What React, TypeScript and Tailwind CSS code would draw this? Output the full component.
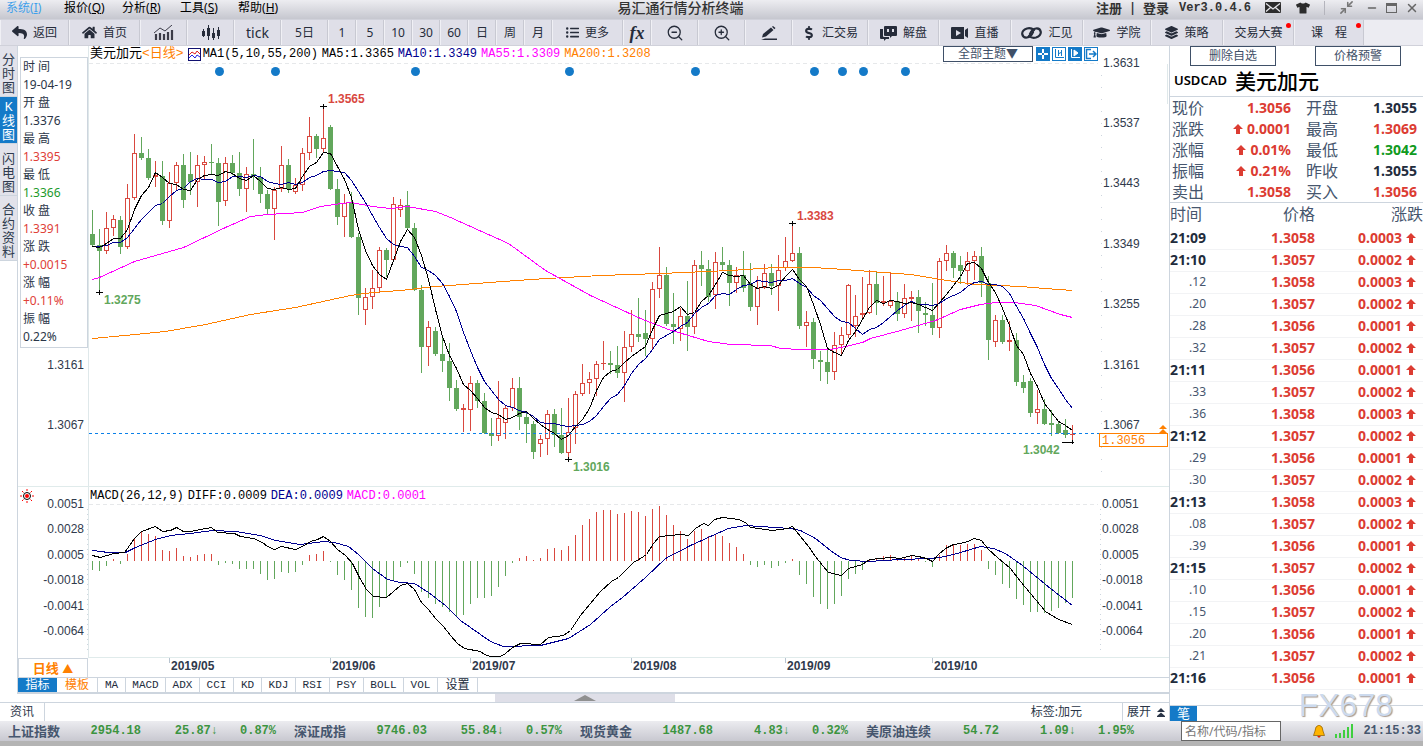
import type { ReactNode } from "react";
import { FaDollarSign, FaGraduationCap, FaHome, FaLayerGroup, FaListUl, FaReply, FaTshirt } from "react-icons/fa";
import { Minimize2, Minus, X, ZoomIn, ZoomOut } from "lucide-react";

// 1 = up (hollow red), 0 = down (solid green); then high, body top, body bottom, low
type Candle = [number, number, number, number, number];

const CANDLES: Candle[] = [
  [0, 210, 234, 245, 245], [0, 229, 245, 251, 292], [1, 212, 228, 251, 253], [1, 215, 219, 228, 235],
  [0, 216, 220, 247, 253], [1, 184, 198, 247, 248], [1, 134, 153, 198, 199], [0, 137, 153, 158, 159],
  [0, 149, 158, 178, 179], [1, 161, 175, 177, 186], [0, 161, 176, 221, 224], [1, 172, 183, 221, 227],
  [1, 162, 165, 183, 190], [0, 154, 165, 200, 207], [0, 152, 174, 182, 194], [1, 155, 165, 182, 206],
  [1, 156, 162, 165, 178], [0, 144, 162, 163, 174], [0, 158, 163, 202, 225], [1, 157, 163, 201, 205],
  [0, 155, 163, 173, 174], [0, 152, 173, 189, 195], [1, 167, 174, 189, 211], [0, 139, 174, 176, 189],
  [0, 167, 177, 194, 202], [0, 190, 194, 209, 214], [1, 187, 190, 209, 239], [1, 146, 165, 189, 191],
  [0, 159, 165, 189, 192], [1, 178, 185, 192, 193], [1, 148, 153, 185, 190], [1, 117, 136, 153, 159],
  [0, 134, 136, 149, 157], [1, 106, 138, 149, 151], [0, 125, 127, 189, 189], [0, 179, 189, 217, 224],
  [1, 194, 203, 217, 236], [0, 192, 203, 237, 237], [0, 233, 237, 298, 314], [1, 288, 297, 310, 324],
  [1, 270, 288, 297, 308], [1, 247, 250, 288, 292], [0, 248, 250, 260, 276], [1, 197, 204, 260, 260],
  [1, 199, 205, 210, 216], [0, 191, 205, 228, 228], [0, 223, 228, 290, 290], [0, 285, 290, 347, 372],
  [1, 321, 327, 347, 365], [0, 327, 331, 354, 355], [0, 337, 354, 361, 371], [0, 343, 361, 388, 400],
  [0, 380, 388, 409, 410], [1, 404, 408, 410, 431], [1, 376, 383, 410, 430], [0, 380, 383, 401, 407],
  [0, 393, 401, 433, 433], [0, 418, 433, 436, 445], [1, 381, 418, 436, 440], [1, 405, 408, 423, 438],
  [1, 378, 388, 408, 410], [0, 377, 388, 417, 429], [0, 411, 417, 424, 442], [0, 421, 424, 452, 458],
  [1, 435, 439, 444, 456], [1, 410, 414, 439, 454], [0, 409, 414, 435, 446], [0, 408, 435, 453, 453],
  [1, 398, 432, 453, 459], [1, 391, 394, 428, 443], [1, 364, 383, 394, 395], [1, 372, 379, 383, 393],
  [1, 361, 364, 379, 395], [1, 341, 363, 364, 369], [0, 351, 363, 365, 373], [0, 346, 365, 373, 377],
  [1, 331, 347, 373, 401], [1, 310, 334, 347, 351], [0, 298, 334, 337, 341], [0, 310, 333, 339, 355],
  [1, 282, 289, 339, 348], [1, 247, 275, 289, 297], [0, 267, 275, 324, 325], [0, 293, 324, 327, 343],
  [1, 308, 316, 329, 340], [0, 281, 316, 327, 350], [1, 260, 265, 327, 333], [0, 251, 265, 269, 285],
  [0, 260, 269, 297, 301], [1, 252, 262, 295, 308], [0, 247, 262, 265, 270], [0, 260, 265, 283, 305],
  [1, 267, 275, 283, 292], [0, 251, 275, 288, 291], [0, 263, 283, 307, 310], [1, 276, 288, 307, 324],
  [1, 264, 273, 288, 288], [0, 264, 273, 286, 294], [1, 255, 270, 286, 310], [1, 237, 261, 268, 270],
  [1, 223, 253, 261, 261], [0, 247, 253, 326, 328], [1, 311, 322, 326, 346], [0, 318, 322, 359, 368],
  [0, 351, 360, 362, 380], [0, 347, 362, 372, 383], [1, 332, 345, 372, 379], [1, 327, 335, 345, 354],
  [1, 284, 285, 335, 337], [1, 295, 316, 326, 336], [1, 277, 313, 315, 318], [1, 270, 284, 313, 313],
  [0, 271, 284, 303, 314], [1, 276, 301, 303, 305], [1, 273, 301, 306, 307], [0, 292, 301, 314, 320],
  [1, 284, 298, 314, 317], [1, 291, 297, 299, 320], [0, 290, 297, 311, 332], [0, 302, 313, 315, 325],
  [0, 283, 315, 328, 334], [1, 258, 261, 328, 337], [1, 245, 253, 261, 270], [0, 251, 253, 268, 277],
  [0, 256, 265, 271, 283], [1, 252, 261, 271, 284], [1, 251, 256, 261, 279], [0, 247, 256, 283, 296],
  [0, 276, 283, 340, 359], [1, 315, 320, 342, 346], [0, 315, 320, 342, 343], [1, 321, 340, 342, 350],
  [0, 333, 340, 382, 385], [0, 375, 382, 388, 392], [0, 378, 381, 413, 416], [1, 390, 409, 413, 423],
  [0, 399, 409, 424, 424], [0, 410, 423, 425, 435], [0, 421, 424, 433, 433], [0, 419, 430, 435, 437],
  [1, 425, 434, 435, 441],
];

// tip of every MACD bar; the zero line is at 561
const MACD_BARS = [
  570, 571, 566, 559, 564, 554, 539, 532, 534, 536, 550, 551, 548, 556, 557, 555, 554, 554, 565, 563,
  564, 569, 569, 569, 574, 580, 579, 572, 573, 572, 565, 555, 554, 551, 562, 575, 580, 590, 608, 617,
  618, 607, 598, 580, 567, 563, 574, 592, 598, 604, 607, 612, 616, 615, 604, 598, 598, 596, 587, 576,
  563, 558, 556, 560, 558, 549, 548, 550, 546, 535, 525, 519, 512, 510, 510, 514, 513, 511, 512, 516,
  509, 506, 515, 525, 531, 539, 531, 529, 536, 535, 536, 543, 547, 554, 565, 567, 565, 568, 566, 563,
  559, 575, 584, 597, 604, 609, 604, 596, 579, 574, 570, 559, 558, 556, 555, 558, 557, 556, 558, 562,
  567, 555, 545, 544, 545, 544, 544, 550, 569, 575, 584, 588, 599, 605, 612, 612, 613, 611, 608, 603,
  598,
];

const MA55 =
  "92,279 99,277 134,261 183,247 225,227 250,216 267,214 302,212 320,206 341,203 351,202 372,206 390,208 407,206 435,211 450,217 508,243 545,270 563,280 590,295 640,318 668,329 708,341 730,344 770,345 780,348 800,349 830,349 845,346 862,342 870,338 900,330 935,320 960,309 980,304 995,302 1014,302 1035,305 1060,314 1072,317";
const MA200 =
  "92,338 135,334 165,331 205,324 250,314 295,307 350,295 372,292 400,290 435,286 530,279 600,275 660,273 730,270 745,269 775,267 810,267 830,268 870,271 910,274 940,279 975,284 1020,286 1045,288 1072,290";
const DIFF =
  "92,555 100,557 113,553 124,552 127,548 134,538 141,531 155,526 162,531 170,530 176,527 183,531 190,531 200,529 211,527 217,532 234,533 240,536 253,538 262,542 267,546 274,549 281,546 295,549 302,546 310,541 317,539 323,536 330,541 337,549 345,555 352,563 359,577 366,589 373,596 386,597 393,591 400,585 407,583 414,589 421,602 428,609 435,618 443,626 450,635 457,643 464,648 480,651 484,654 490,656 500,656 505,653 512,647 520,643 540,644 548,637 563,635 570,630 580,615 600,591 611,581 618,577 633,562 640,558 646,554 653,543 659,536 680,534 688,535 695,528 703,523 708,525 714,519 722,517 738,519 745,522 750,527 758,528 772,530 787,528 792,526 800,536 808,546 815,556 822,565 828,572 841,575 848,568 862,564 869,559 890,557 900,558 911,555 918,556 926,558 932,561 938,554 945,548 953,544 960,543 967,541 974,538 981,540 988,549 997,557 1010,568 1020,581 1035,599 1045,611 1058,619 1072,624";
const DEA =
  "92,550 108,552 125,552 135,547 155,539 170,535 190,533 212,530 235,531 260,535 275,540 300,544 323,541 334,542 348,546 358,554 372,568 387,579 400,582 414,583 428,592 445,605 460,620 480,634 490,641 503,646 540,645 568,638 590,624 610,606 622,597 645,577 665,558 690,545 710,536 728,528 745,525 790,528 800,530 815,538 830,550 840,557 850,560 868,561 900,559 930,558 945,556 960,552 980,546 993,548 1005,553 1022,565 1050,588 1072,605";

const barX = (i: number) => 92 + i * 7;

function movingAverage(n: number) {
  const closes = [...Array(n - 1).fill(246), ...CANDLES.map((c) => (c[0] ? c[2] : c[3]))];
  return CANDLES.map((_, i) => {
    const sum = closes.slice(i, i + n).reduce((a, b) => a + b, 0);
    return `${barX(i)},${Math.round(sum / n)}`;
  }).join(" ");
}

const PRICE_LABELS: [string, number][] = [
  ["1.3631", 63], ["1.3537", 123], ["1.3443", 183], ["1.3349", 244], ["1.3255", 304], ["1.3161", 365], ["1.3067", 425],
];
const MACD_LABELS: [string, number][] = [
  ["0.0051", 504], ["0.0028", 529], ["0.0005", 555], ["-0.0018", 580], ["-0.0041", 606], ["-0.0064", 631],
];
const EVENTS = [219, 275, 415, 569, 695, 814, 842, 863, 905];
const MONTHS: [string, number][] = [
  ["2019/05", 169], ["2019/06", 330], ["2019/07", 470], ["2019/08", 631], ["2019/09", 785], ["2019/10", 932],
];

const INFO: [string, string, string][] = [
  ["时 间", "19-04-19", "text-[#2b3648]"],
  ["开 盘", "1.3376", "text-[#2b3648]"],
  ["最 高", "1.3395", "text-[#e04038]"],
  ["最 低", "1.3366", "text-[#1c9a2c]"],
  ["收 盘", "1.3391", "text-[#e04038]"],
  ["涨 跌", "+0.0015", "text-[#e04038]"],
  ["涨 幅", "+0.11%", "text-[#e04038]"],
  ["振 幅", "0.22%", "text-[#2b3648]"],
];

const QUOTE: [string, string, string, boolean][] = [
  ["现价", "1.3056", "text-[#dc3c32]", false], ["开盘", "1.3055", "text-[#222c3c]", false],
  ["涨跌", "0.0001", "text-[#dc3c32]", true], ["最高", "1.3069", "text-[#dc3c32]", false],
  ["涨幅", "0.01%", "text-[#dc3c32]", true], ["最低", "1.3042", "text-[#109a20]", false],
  ["振幅", "0.21%", "text-[#dc3c32]", true], ["昨收", "1.3055", "text-[#222c3c]", false],
  ["卖出", "1.3058", "text-[#dc3c32]", false], ["买入", "1.3056", "text-[#dc3c32]", false],
];

const TICKS: [string, string, string][] = [
  ["21:09", "1.3058", "0.0003"], ["21:10", "1.3057", "0.0002"], [".12", "1.3058", "0.0003"],
  [".20", "1.3057", "0.0002"], [".28", "1.3056", "0.0001"], [".32", "1.3057", "0.0002"],
  ["21:11", "1.3056", "0.0001"], [".33", "1.3057", "0.0002"], [".36", "1.3058", "0.0003"],
  ["21:12", "1.3057", "0.0002"], [".29", "1.3056", "0.0001"], [".30", "1.3057", "0.0002"],
  ["21:13", "1.3058", "0.0003"], [".08", "1.3057", "0.0002"], [".39", "1.3056", "0.0001"],
  ["21:15", "1.3057", "0.0002"], [".10", "1.3056", "0.0001"], [".15", "1.3057", "0.0002"],
  [".20", "1.3056", "0.0001"], [".21", "1.3057", "0.0002"], ["21:16", "1.3056", "0.0001"],
];

const INDEXES = [
  ["上证指数", "2954.18", "25.87", "0.87%"],
  ["深证成指", "9746.03", "55.84", "0.57%"],
  ["现货黄金", "1487.68", "4.83", "0.32%"],
  ["美原油连续", "54.72", "1.09", "1.95%"],
];

function UpArrow() {
  return (
    <svg viewBox="0 0 10 10" className="size-[10px] shrink-0 fill-[#dc3c32]">
      <path d="M5 0L10 5H7V10H3V5H0Z" />
    </svg>
  );
}

function MenuBar() {
  const menus = [["系统", "I"], ["报价", "Q"], ["分析", "R"], ["工具", "S"], ["帮助", "H"]];
  return (
    <header className="flex h-[19px] items-center bg-gradient-to-b from-[#ededf1] to-[#c6c7cf] leading-4">
      <nav className="flex flex-1 pl-1.5 text-[12px]">
        {menus.map(([name, key], i) => (
          <button key={key} className={`w-[58px] pb-1 text-left whitespace-nowrap ${i === 0 ? "text-[#3fa0ea]" : "text-black"}`}>
            {name}(<u>{key}</u>)
          </button>
        ))}
      </nav>
      <h1 className="mr-16 pb-1 text-[14px] font-medium text-[#333]">易汇通行情分析终端</h1>
      <div className="flex flex-1 items-center justify-end pr-1 pb-1 text-[#333]">
        <button className="text-[13px] font-bold">注册</button>
        <span className="w-[21px] text-center text-[12px] font-bold">|</span>
        <button className="text-[13px] font-bold">登录</button>
        <span className="ml-2.5 font-['Liberation_Mono',monospace] text-[12px] font-bold">Ver3.0.4.6</span>
        <button aria-label="邮件" className="ml-3.5">
          <svg viewBox="0 0 16 11" className="h-[11px] w-4">
            <rect width="16" height="11" rx="1" fill="#2c2c2c" />
            <path d="M1 1.5L8 7L15 1.5M1 9.5L5.5 5.5M15 9.5L10.5 5.5" fill="none" stroke="#e4e4e8" strokeWidth="1.3" />
          </svg>
        </button>
        <button aria-label="皮肤" className="ml-[15px]"><FaTshirt className="size-[14px] text-[#2c2c2c]" /></button>
        <span className="ml-3.5 h-3.5 w-px bg-[#b4b4bc]" />
        <button aria-label="还原" className="ml-3.5"><Minimize2 className="size-[15px] text-[#777]" strokeWidth={2.5} /></button>
        <button aria-label="最小化" className="ml-3"><Minus className="size-3 text-[#666]" strokeWidth={3} /></button>
        <button aria-label="最大化" className="ml-2 h-2.5 w-[11px] border border-t-[3px] border-[#666]" />
        <button aria-label="关闭" className="ml-2"><X className="size-[14px] text-[#666]" strokeWidth={2.5} /></button>
      </div>
    </header>
  );
}

function Tool({ w, children }: { w: string; children: ReactNode }) {
  return (
    <button className={`${w} relative flex shrink-0 items-center justify-center gap-1.5 border-r border-r-[#c8c9d2] border-l border-l-[#f0f0f5]`}>
      {children}
    </button>
  );
}

function Toolbar() {
  return (
    <div className="flex h-[27px] overflow-hidden border-t border-b border-[#d0d1da] bg-[#ececf2] text-[12px] text-[#262c3a] [&>button]:bg-[#dfdfe8]">
      <Tool w="w-[69px]"><FaReply className="size-[15px]" />返回</Tool>
      <Tool w="w-[71px]"><FaHome className="size-[15px]" />首页</Tool>
      <Tool w="w-[47px]">
        <svg viewBox="0 0 20 16" className="h-4 w-5" fill="none" stroke="#3c3c48">
          <path d="M2 15V9M6 15V8M10 15V9M14 15V7M18 15V5" strokeWidth="2.2" />
          <path d="M0 8L6 3L11 6L18 0" />
        </svg>
      </Tool>
      <Tool w="w-[47px]">
        <svg viewBox="0 0 20 16" className="h-4 w-5" fill="#262c3a">
          <path d="M1 6h3v5H1zM2 4h1v8H2zM6 3h3v8H6zM7 0h1v15H7zM11 8h3v5h-3zM12 3h1v12h-1zM16 5h3v6h-3zM17 2h1v12h-1z" />
        </svg>
      </Tool>
      <Tool w="w-[47px]"><span className="text-[14px]">tick</span></Tool>
      <Tool w="w-[47px]">5日</Tool>
      {["1", "5", "10", "30", "60", "日", "周", "月"].map((t) => <Tool key={t} w="w-[28px]">{t}</Tool>)}
      <Tool w="w-[71px]"><FaListUl className="size-[13px]" />更多</Tool>
      <Tool w="w-[28px]"><i className="font-['Liberation_Serif',serif] text-[18px] leading-4 font-bold">fx</i></Tool>
      <Tool w="w-[47px]"><ZoomOut className="size-[18px]" strokeWidth={1.7} /></Tool>
      <Tool w="w-[47px]"><ZoomIn className="size-[18px]" strokeWidth={1.7} /></Tool>
      <Tool w="w-[47px]">
        <svg viewBox="0 0 16 14" className="h-3.5 w-4" fill="#262c3a">
          <path d="M2 8L10 1.5L12.5 4L5 10.5L1 11.5ZM11 .8L12 0L14.5 2L13.3 3.2ZM4 12.5H16V14H0Z" />
        </svg>
      </Tool>
      <Tool w="w-[76px]"><FaDollarSign className="size-[14px]" />汇交易</Tool>
      <Tool w="w-[71px]">
        <svg viewBox="0 0 17 16" className="h-4 w-[17px]" fill="#262c3a">
          <path d="M5 1h11q1 0 1 1v8q0 1-1 1h-4l-2 2v-2H5q-1 0-1-1V2q0-1 1-1z" />
          <path d="M0 4h3v7q0 1 1 1h5v2H6l-2 2v-2H1q-1 0-1-1z" />
          <path d="M7 4h2v3H7zM12 4h2v3h-2z" fill="#dfdfe8" />
        </svg>
        解盘
      </Tool>
      <Tool w="w-[72px]">
        <svg viewBox="0 0 17 12" className="h-3 w-[17px]" fill="#262c3a">
          <path d="M1 0H13V12H1Q0 12 0 11V1Q0 0 1 0ZM14 3L17 1V11L14 9Z" />
          <path d="M5 3L10 6L5 9Z" fill="#dfdfe8" />
        </svg>
        直播
      </Tool>
      <Tool w="w-[72px]">
        <svg viewBox="0 0 21 12" className="h-3 w-[21px]" fill="none" stroke="#262c3a" strokeWidth="2.2" strokeLinecap="round">
          <path d="M13 3Q10 .5 6 1.5Q1 3 1.2 7Q2 11 6 10.5Q10 10 12 5" />
          <path d="M8 9Q11 11.5 15 10.5Q20 9 19.8 5Q19 1 15 1.5Q11 2 9 7" />
        </svg>
        汇见
      </Tool>
      <Tool w="w-[68px]"><FaGraduationCap className="size-[17px]" />学院</Tool>
      <Tool w="w-[72px]"><FaLayerGroup className="size-[13px]" />策略</Tool>
      <Tool w="w-[71px]">
        交易大赛
        <span className="absolute top-[3px] right-[2px] size-[5px] rounded-full bg-[#f00]" />
      </Tool>
      <Tool w="w-[70px]">
        <span className="flex gap-3"><span>课</span><span>程</span></span>
        <span className="absolute top-[3px] right-[2px] size-[5px] rounded-full bg-[#f00]" />
      </Tool>
    </div>
  );
}

function SideTabs() {
  const tab = "flex w-full items-center justify-center border-b border-[#cdd5de]";
  return (
    <div className="w-[18px] shrink-0 border-r border-[#cdd5de] text-[13px] leading-[14px] break-all text-[#2f3b4e]">
      <button className={`${tab} h-[51px] bg-[#e2e2ea] pt-1`}><span className="w-[13px]">分时图</span></button>
      <button className={`${tab} h-[47px] bg-[#147ac8] text-white`}><span className="w-[13px]">K线图</span></button>
      <button className={`${tab} h-[52px] bg-[#e2e2ea] pt-1`}><span className="w-[13px]">闪电图</span></button>
      <button className={`${tab} h-[65px] bg-[#e2e2ea] pt-1`}><span className="w-[13px]">合约资料</span></button>
    </div>
  );
}

function Cross({ x, y }: { x: number; y: number }) {
  return <path d={`M${x - 3} ${y + 0.5}H${x + 4}M${x + 0.5} ${y - 2}V${y + 3}`} stroke="#000" />;
}

function PriceChart() {
  return (
    <svg
      viewBox="18 63 1151 424"
      className="block h-auto w-full overflow-visible font-['Liberation_Sans',sans-serif] text-[12px]"
      shapeRendering="crispEdges"
      fill="none"
    >
      <path d="M88.5 46V487M1167.5 64V104" stroke="#dfe8ea" />
      <path d="M89 63.5H1098" stroke="#e6e8ea" strokeDasharray="4 3" />
      <path d="M18 486.5H1169" stroke="#e0ebeb" />
      <path d="M1101.5 75V480" stroke="#cdd5de" strokeDasharray="1 11" />
      <g fill="#147ac8" shapeRendering="auto">
        {EVENTS.map((x) => <circle key={x} cx={x + 0.5} cy={71.5} r={4.5} />)}
      </g>
      {CANDLES.map(([up, high, top, bottom, low], i) => {
        const x = barX(i);
        const color = up ? "#d9483f" : "#62a75c";
        return (
          <g key={i}>
            <rect x={x} y={high} width={1} height={low - high + 1} fill={color} />
            <rect x={x - 2} y={top} width={5} height={Math.max(bottom - top, 1)} fill={color} />
            {up === 1 && bottom - top > 2 && (
              <rect x={x - 1} y={top + 1} width={3} height={bottom - top - 2} fill="#fff" />
            )}
          </g>
        );
      })}
      <g transform="translate(0.5 0.5)">
        <polyline points={MA200} stroke="#ff8000" />
        <polyline points={MA55} stroke="#f0f" />
        <polyline points={movingAverage(10)} stroke="#000090" />
        <polyline points={movingAverage(5)} stroke="#000" />
      </g>
      <path d="M89 433.5H1099" stroke="#0a80e8" strokeDasharray="3 3" />

      <Cross x={99} y={292} />
      <Cross x={323} y={106} />
      <Cross x={568} y={459} />
      <Cross x={792} y={223} />
      <path d="M1062 442.5H1074M1072.5 440V444" stroke="#000" />
      <g className="font-bold" fill="#d9483f">
        <text x="328" y="103">1.3565</text>
        <text x="797" y="220">1.3383</text>
      </g>
      <g className="font-bold" fill="#62a75c">
        <text x="104" y="304">1.3275</text>
        <text x="573" y="471">1.3016</text>
        <text x="1023" y="454">1.3042</text>
      </g>
      <g fill="#303a4c">
        {PRICE_LABELS.map(([t, y]) => <text key={t} x={1103} y={y + 4}>{t}</text>)}
        {PRICE_LABELS.slice(5).map(([t, y]) => <text key={t} x={84} y={y + 4} textAnchor="end">{t}</text>)}
      </g>
      <rect x="1099.5" y="433.5" width="68" height="13" stroke="#ff8000" fill="#fff" />
      <text x="1102" y="444" fill="#ff8000" className="font-['Liberation_Mono',monospace]">1.3056</text>
      <path d="M1159 429L1163 425L1167 429ZM1159 433L1163 429L1167 433Z" fill="#ff8000" shapeRendering="auto" />
    </svg>
  );
}

function MacdChart() {
  return (
    <svg
      viewBox="18 504 1151 154"
      className="block h-auto w-full overflow-visible font-['Liberation_Sans',sans-serif] text-[12px]"
      shapeRendering="crispEdges"
      fill="none"
    >
      <path d="M88.5 487V658" stroke="#dfe8ea" />
      <path d="M89 504.5H1098" stroke="#e6e8ea" strokeDasharray="4 3" />
      <path d="M88 657.5H1169" stroke="#e0ebeb" />
      <path d="M87.5 509V654M1100.5 509V654" stroke="#cdd5de" strokeDasharray="1 4" />
      {MACD_BARS.map((y, i) => (
        <rect
          key={i}
          x={barX(i)}
          y={Math.min(y, 561)}
          width={1}
          height={Math.abs(y - 561) || 1}
          fill={y < 561 ? "#d9483f" : "#62a75c"}
        />
      ))}
      <g transform="translate(0.5 0.5)">
        <polyline points={DEA} stroke="#000090" />
        <polyline points={DIFF} stroke="#000" />
      </g>
      <g fill="#303a4c">
        {MACD_LABELS.map(([t, y]) => <text key={t} x={84} y={y + 4} textAnchor="end">{t}</text>)}
        {MACD_LABELS.map(([t, y]) => <text key={t} x={1102} y={y + 4}>{t}</text>)}
      </g>
    </svg>
  );
}

function InfoPanel() {
  return (
    <dl className="absolute top-[11px] left-[2px] w-[68px] border border-[#cdd5de] bg-white pb-px pl-0.5 text-[12px] leading-[18px] text-[#2b3648]">
      {INFO.map(([label, value, color]) => (
        <div key={label}>
          <dt>{label}</dt>
          <dd className={color}>{value}</dd>
        </div>
      ))}
    </dl>
  );
}

function ChartHeader() {
  const sq = "flex size-[14px] items-center justify-center border border-[#147ac8]";
  return (
    <div className="flex h-[17px] items-start pl-[72px] leading-4">
      <div className="flex flex-1 items-center gap-1 whitespace-nowrap text-[12px] font-['Liberation_Mono','Noto_Sans_CJK_SC',monospace]">
        <span className="text-[13px] text-black">
          美元加元<span className="text-[#ff8000]">&lt;日线&gt;</span>
        </span>
        <span className="flex items-center gap-0.5">
          <svg viewBox="0 0 13 13" className="size-[13px]" fill="none">
            <rect x=".5" y=".5" width="12" height="12" stroke="#101070" />
            <path d="M1 7L4 4L7 6L9 3L12 6" stroke="#e02020" />
            <path d="M1 10L4 7L7 10L9 7L12 9" stroke="#2020e0" />
          </svg>
          <span className="text-black">MA1(5,10,55,200)</span>
        </span>
        <span className="text-black">MA5:1.3365</span>
        <span className="text-[#000090]">MA10:1.3349</span>
        <span className="text-[#f0f]">MA55:1.3309</span>
        <span className="text-[#ff8000]">MA200:1.3208</span>
      </div>
      <div className="mr-[71px] flex items-center gap-0.5">
        <button className="mr-px h-4 w-[90px] border border-[#3f5068] text-[12px] leading-[14px] text-[#3f5068]">全部主题▼</button>
        <button aria-label="十字光标" className={`${sq} bg-[#147ac8]`}>
          <svg viewBox="0 0 12 12" className="size-3" stroke="#fff" strokeWidth="2"><path d="M6 1V5M6 7V11M1 6H5M7 6H11" /></svg>
        </button>
        <button aria-label="坐标" className={sq}>
          <svg viewBox="0 0 12 12" className="size-3" stroke="#147ac8" fill="none"><path d="M2.5 1V9.5H11M5.5 2V8M8.5 2V8M5 6L9 4" /></svg>
        </button>
        <button aria-label="播放" className={`${sq} bg-[#147ac8]`}>
          <svg viewBox="0 0 12 12" className="size-3" stroke="#fff" fill="none"><path d="M2.5 1V9.5H11" /><path d="M5 2L9 5L5 8Z" fill="#fff" /></svg>
        </button>
        <button aria-label="移到最右" className={sq}>
          <svg viewBox="0 0 12 12" className="size-3" stroke="#147ac8" fill="none"><path d="M6 1.5H1.5V10.5H6M4 6H10M8 3L11 6L8 9" strokeWidth="1.5" /></svg>
        </button>
      </div>
    </div>
  );
}

function MacdHeader() {
  return (
    <div className="flex h-[17px] items-center font-['Liberation_Mono',monospace] text-[12px] leading-4">
      <div className="w-[72px] pl-0.5">
        <svg viewBox="0 0 14 14" className="size-[14px]" fill="none">
          <path d="M7 0V2M7 12V14M0 7H2M12 7H14M2 2L3.5 3.5M10.5 10.5L12 12M12 2L10.5 3.5M2 12L3.5 10.5" stroke="#f00" />
          <circle cx="7" cy="7" r="3.5" stroke="#000" />
          <circle cx="7" cy="7" r="2" fill="#f00" />
        </svg>
      </div>
      <div className="flex gap-1 whitespace-nowrap">
        <span className="text-black">MACD(26,12,9)</span>
        <span className="text-black">DIFF:0.0009</span>
        <span className="text-[#000090]">DEA:0.0009</span>
        <span className="text-[#f0f]">MACD:0.0001</span>
      </div>
    </div>
  );
}

function IndicatorTabs() {
  const narrow = ["ADX", "CCI", "RSI", "PSY", "VOL", "KDJ"];
  const names = ["MA", "MACD", "ADX", "CCI", "KD", "KDJ", "RSI", "PSY", "BOLL", "VOL", "设置"];
  return (
    <div className="flex h-[17px] border-t border-b-2 border-[#cdd5de] text-[12px] leading-[14px]">
      <button className="w-[39px] bg-[#147ac8] text-white">指标</button>
      <button className="w-[41px] border-r border-[#cdd5de] text-[#ff8000]">模板</button>
      {names.map((n) => (
        <button
          key={n}
          className={`${n === "MA" || n === "KD" ? "w-[28px]" : narrow.includes(n) ? "w-[34px]" : "w-[40px]"} border-r border-[#cdd5de] text-[#222c3c] ${
            n === "设置" ? "" : "font-['Liberation_Mono',monospace] text-[11px]"
          }`}
        >
          {n}
        </button>
      ))}
    </div>
  );
}

function ChartArea() {
  return (
    <main className="min-w-0 flex-1">
      <section className="relative">
        <ChartHeader />
        <PriceChart />
        <InfoPanel />
      </section>
      <MacdHeader />
      <MacdChart />
      <div className="flex h-[19px]">
        <button className="w-[70px] shrink-0 border border-b-0 border-[#cdd5de] text-[13px] leading-[18px] font-bold text-[#ff8000]">
          日线 <span className="text-[11px]">▲</span>
        </button>
        <svg viewBox="88 658 1081 19" className="h-[19px] min-w-0 flex-1 font-['Liberation_Sans',sans-serif] text-[12px] font-bold">
          {MONTHS.map(([t, x]) => (
            <g key={t}>
              <path d={`M${x + 0.5} 658V663`} stroke="#b8c4d0" />
              <text x={x + 2} y={670} fill="#303a4c">{t}</text>
            </g>
          ))}
        </svg>
      </div>
      <IndicatorTabs />
    </main>
  );
}

function QuotePanel() {
  const btn = "h-5 w-[86px] border border-[#3f5068] text-[12px] leading-[18px] text-[#3f5068]";
  return (
    <aside className="relative flex w-[254px] shrink-0 flex-col border-l border-[#cdd5de]">
      <div className="flex gap-[39px] pl-5">
        <button className={btn}>删除自选</button>
        <button className={btn}>价格预警</button>
      </div>
      <h2 className="flex h-[31px] items-center gap-2 border-b border-[#cdd5de] pl-1 text-black">
        <span className="text-[13px] font-semibold">USDCAD</span>
        <span className="text-[21px] leading-6 font-medium">美元加元</span>
      </h2>
      <dl className="grid grid-cols-[119px_1fr] gap-x-[15px] border-b border-[#cdd5de] pr-1.5 pl-0.5">
        {QUOTE.map(([label, value, color, arrow]) => (
          <div key={label} className="flex h-[21px] items-center justify-between">
            <dt className="text-[16px] leading-5 text-[#46566e]">{label}</dt>
            <dd className={`flex items-center gap-1 text-[14px] leading-5 font-bold ${color}`}>
              {arrow && <UpArrow />}
              {value}
            </dd>
          </div>
        ))}
      </dl>
      <table className="w-full table-fixed border-collapse">
        <thead>
          <tr className="h-6 align-top text-[16px] leading-[22px] text-[#46566e] [&>th]:p-0 [&>th]:font-normal">
            <th className="w-[36px] text-left whitespace-nowrap">时间</th>
            <th className="w-[109px] text-right">价格</th>
            <th className="text-right">涨跌</th>
          </tr>
        </thead>
        <tbody>
          {TICKS.map(([time, price, change], i) => (
            <tr key={i} className="h-[22px] border-b border-[#f2f3f5] text-right text-[14px] leading-5 font-bold text-[#dc3c32]">
              <td className={`p-0 ${time[0] === "." ? "text-[12px] font-normal text-[#46566e]" : "text-[#222c3c]"}`}>{time}</td>
              <td className="p-0">{price}</td>
              <td className="py-0 pr-[7px] pl-0">
                <span className="flex items-center justify-end gap-1">{change}<UpArrow /></span>
              </td>
            </tr>
          ))}
        </tbody>
      </table>
      <div className="mt-auto h-4 border-t border-[#cdd5de]">
        <button className="block h-[15px] w-[27px] bg-[#147ac8] text-[13px] leading-[15px] text-white">笔</button>
      </div>
      <div className="pointer-events-none absolute right-[30px] bottom-1 font-['Liberation_Sans',sans-serif] text-[32px] leading-6 text-[#ccdaee] [text-shadow:1px_1px_1px_#a89a90]">
        FX678
      </div>
    </aside>
  );
}

function StatusBar() {
  return (
    <footer className="border-b-[5px] border-[#b4b4b4] bg-gradient-to-b from-[#ececf0] to-[#c8c8d0]">
      <div className="flex h-5 items-center pl-2 leading-4">
        {INDEXES.map(([name, value, change, pct]) => (
          <div key={name} className="flex w-[286px] shrink-0 items-center font-['Liberation_Mono',monospace] text-[12px] font-bold text-[#3c9440]">
            <span className="w-[64px] font-['Noto_Sans_CJK_SC',sans-serif] text-[13px] whitespace-nowrap text-[#46566e]">{name}</span>
            <span className="w-[69px] text-right">{value}</span>
            <span className="w-[77px] text-right">{change}↓</span>
            <span className="w-[58px] text-right">{pct}</span>
          </div>
        ))}
        <div className="flex flex-1 items-center">
          <input
            aria-label="搜索"
            placeholder="名称/代码/指标"
            className="ml-[29px] h-5 w-[100px] border border-[#666] bg-white px-[3px] text-[12px] placeholder:text-[#777]"
          />
          <svg viewBox="0 0 12 13" className="ml-auto h-[13px] w-3">
            <path d="M6 0Q10 1 10 6L11.5 10.5H.5L2 6Q2 1 6 0Z" fill="#ffb400" stroke="#8a5a00" strokeWidth=".7" />
            <path d="M4 11H8L6 13Z" fill="#e02000" />
          </svg>
          <svg viewBox="0 0 18 14" className="mx-2.5 h-3.5 w-[18px]" fill="#3fcf3f">
            <path d="M0 10h2v4H0zM4 9h2v5H4zM8 6h2v8H8zM12 3h2v11h-2zM16 0h2v14h-2z" />
          </svg>
          <time className="mr-0.5 font-['Liberation_Mono',monospace] text-[12px] font-bold text-[#46566e]">21:15:33</time>
        </div>
      </div>
    </footer>
  );
}

export default function App() {
  return (
    <div className="flex min-h-screen flex-col bg-white font-['Noto_Sans','Noto_Sans_CJK_SC',sans-serif]">
      <MenuBar />
      <Toolbar />
      <div className="flex flex-1">
        <div className="flex min-w-0 flex-1 flex-col">
          <div className="flex flex-1">
            <SideTabs />
            <ChartArea />
          </div>
          <div className="flex h-[9px] justify-center border-b border-[#cdd5de]">
            <button aria-label="展开资讯" className="flex w-[180px] items-center justify-center bg-[#dfdfe8]">
              <svg viewBox="0 0 22 6" className="h-1.5 w-[22px] fill-[#909090]"><path d="M0 6L11 0L22 6Z" /></svg>
            </button>
          </div>
          <div className="flex h-[18px] text-[12px] leading-[18px] text-[#2b3648]">
            <button className="w-[45px] border-r border-[#cdd5de]">资讯</button>
            <span className="mr-[40px] ml-auto">标签:加元</span>
            <button className="flex w-[47px] items-center justify-center gap-1.5 border-l border-[#cdd5de]">
              展开
              <svg viewBox="0 0 8 9" className="h-[9px] w-2 fill-[#2b3648]"><path d="M0 4L4 0L8 4ZM0 8L4 4.5L8 8V9H0Z" /></svg>
            </button>
          </div>
        </div>
        <QuotePanel />
      </div>
      <StatusBar />
    </div>
  );
}
